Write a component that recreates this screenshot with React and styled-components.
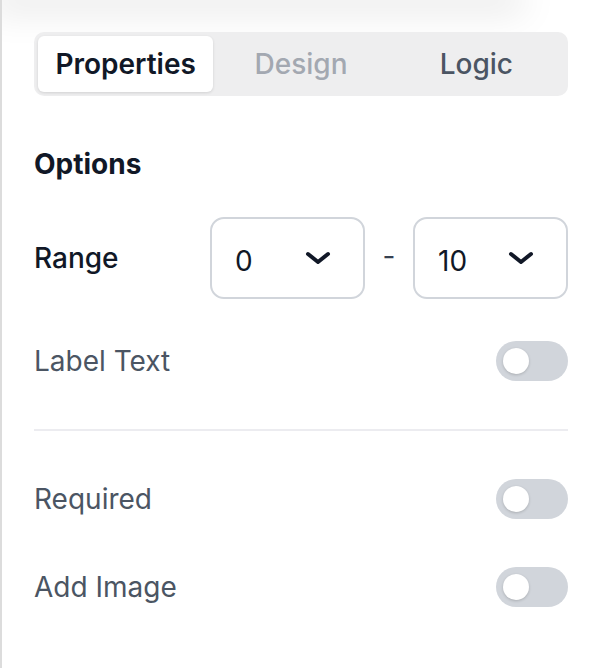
import React from "react";
import styled, { createGlobalStyle } from "styled-components";

const Global = createGlobalStyle`
  html, body { margin: 0; padding: 0; background: #ffffff; }
  body { font-family: Inter, "Noto Sans", sans-serif; -webkit-font-smoothing: antialiased; }
  * { box-sizing: border-box; }
`;

const Panel = styled.div`
  width: 592px;
  height: 668px;
  background: #ffffff;
  border-left: 2px solid #dcdcdc;
  overflow: hidden;
  display: flex;
  flex-direction: column;
`;

const TopShadow = styled.div`
  height: 0;
  width: 510px;
  flex: none;
  box-shadow: 0 0 36px 12px rgba(0, 0, 0, 0.1);
`;

const Content = styled.div`
  padding: 0 24px 0 32px;
  display: flex;
  flex-direction: column;
`;

const Tabs = styled.div`
  margin-top: 32px;
  height: 64px;
  padding: 4px;
  border-radius: 10px;
  background: #eeeeef;
  display: grid;
  grid-template-columns: repeat(3, 1fr);
`;

const Tab = styled.div`
  display: flex;
  align-items: center;
  justify-content: center;
  border-radius: 6px;
  font-size: 28px;
  font-weight: ${(p) => (p.$active ? 600 : 500)};
  color: ${(p) => p.$color};
  background: ${(p) => (p.$active ? "#ffffff" : "transparent")};
  box-shadow: ${(p) => (p.$active ? "0 1px 3px rgba(0,0,0,0.12)" : "none")};
`;

const Heading = styled.div`
  margin-top: 52px;
  line-height: 32px;
  font-size: 28px;
  font-weight: 700;
  color: #111827;
`;

const RangeRow = styled.div`
  margin-top: 37px;
  height: 82px;
  display: flex;
  align-items: center;
`;

const RangeLabel = styled.div`
  width: 176px;
  font-size: 28px;
  font-weight: 500;
  color: #111827;
`;

const Select = styled.div`
  width: 155px;
  height: 82px;
  border: 2px solid #d1d5db;
  border-radius: 14px;
  display: flex;
  align-items: center;
  justify-content: space-between;
  padding: 0 32px 0 23px;
  font-size: 28px;
  color: #111827;
`;

const Value = styled.span`
  padding-top: 6px;
`;

const Dash = styled.div`
  flex: 1;
  text-align: center;
  font-size: 28px;
  color: #374151;
  padding-bottom: 4px;
`;

const ToggleRow = styled.div`
  margin-top: ${(p) => p.$mt}px;
  height: 40px;
  display: flex;
  align-items: center;
  justify-content: space-between;
`;

const RowLabel = styled.div`
  font-size: 28px;
  color: #4b5563;
`;

const Track = styled.div`
  width: 72px;
  height: 40px;
  border-radius: 20px;
  background: #d1d5db;
  display: flex;
  align-items: center;
  padding-left: 7px;
`;

const Knob = styled.div`
  width: 26px;
  height: 26px;
  border-radius: 50%;
  background: #ffffff;
  box-shadow: 0 1px 3px rgba(0, 0, 0, 0.18);
`;

const Divider = styled.div`
  margin-top: 48px;
  height: 2px;
  background: #ececf0;
`;

const Chevron = () => (
  <svg width="26" height="14" viewBox="0 0 26 14" fill="none">
    <path d="M3 3 L13 11 L23 3" stroke="#111827" strokeWidth="4" strokeLinecap="round" strokeLinejoin="round" />
  </svg>
);

const Toggle = () => (
  <Track>
    <Knob />
  </Track>
);

export default function App() {
  return (
    <>
      <Global />
      <Panel>
        <TopShadow />
        <Content>
          <Tabs>
            <Tab $active $color="#111827">Properties</Tab>
            <Tab $color="#a3a8b1">Design</Tab>
            <Tab $color="#4b5563">Logic</Tab>
          </Tabs>
          <Heading>Options</Heading>
          <RangeRow>
            <RangeLabel>Range</RangeLabel>
            <Select>
              <Value>0</Value>
              <Chevron />
            </Select>
            <Dash>-</Dash>
            <Select>
              <Value>10</Value>
              <Chevron />
            </Select>
          </RangeRow>
          <ToggleRow $mt={42}>
            <RowLabel>Label Text</RowLabel>
            <Toggle />
          </ToggleRow>
          <Divider />
          <ToggleRow $mt={48}>
            <RowLabel>Required</RowLabel>
            <Toggle />
          </ToggleRow>
          <ToggleRow $mt={48}>
            <RowLabel>Add Image</RowLabel>
            <Toggle />
          </ToggleRow>
        </Content>
      </Panel>
    </>
  );
}
